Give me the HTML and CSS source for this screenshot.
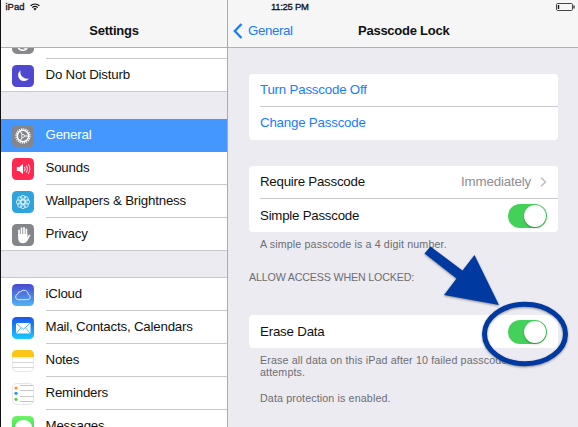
FILE: index.html
```html
<!DOCTYPE html>
<html lang="en">
<head>
<meta charset="utf-8">
<title>Settings</title>
<link rel="stylesheet" href="styles.css">
</head>
<body>
<div class="screen">
  <aside class="sidebar">
    <header class="bar">
      <div class="status"><span class="device">iPad</span>
        <svg class="wifi" width="10" height="8" viewBox="0 0 10 8"><path d="M.6 2.800a6.300 6.300 0 0 1 8.800 0M2.300 4.600a3.900 3.900 0 0 1 5.400 0" fill="none" stroke="#111" stroke-width="1.200"/><path d="M3.400 5.700a2.300 2.300 0 0 1 3.200 0L5 7.500z" fill="#111"/></svg>
      </div>
      <h1 class="title">Settings</h1>
    </header>
    <ul class="list first">
      <li class="row clipped">
        <svg class="icon" viewBox="0 0 22 22"><rect width="22" height="22" rx="5" fill="#88888d"/><path d="M6 14c0 5 9 6 9 1l1.500-2" fill="none" stroke="#fff" stroke-width="1.500"/><path d="M9 15l4 2 3-3" fill="#fff"/></svg>
        <span class="label"></span>
      </li>
      <li class="row last">
        <svg class="icon" viewBox="0 0 22 22"><rect width="22" height="22" rx="4.500" fill="#5048cf"/><path d="M8.600 5.200A6 6 0 1 0 17 13.500A6.800 6.800 0 0 1 8.600 5.200z" fill="#fff"/></svg>
        <span class="label">Do Not Disturb</span>
      </li>
    </ul>
    <ul class="list second">
      <li class="row selected">
        <svg class="icon" viewBox="0 0 22 22"><rect width="22" height="22" rx="4.500" fill="#85868b"/><circle cx="11" cy="11" r="7" fill="none" stroke="#fff" stroke-width="1.400" stroke-dasharray="1.200 1"/><circle cx="11" cy="11" r="5.700" fill="none" stroke="#fff" stroke-width="1.500"/><path d="M11 11h5M11 11l-2.600-4.600M11 11l-2.600 4.600" stroke="#fff" stroke-width="1"/><circle cx="11" cy="11" r="1.500" fill="#85868b" stroke="#fff" stroke-width=".8"/></svg>
        <span class="label">General</span>
      </li>
      <li class="row">
        <svg class="icon" viewBox="0 0 22 22"><rect width="22" height="22" rx="4.500" fill="#ff2850"/><path d="M4.800 9h2.400l3.800-3v10l-3.800-3H4.800z" fill="#fff"/><path d="M12.500 8.800q1.400 2.200 0 4.400M14.400 7.500q2.300 3.500 0 7M16.300 6.300q3.100 4.700 0 9.400" fill="none" stroke="#fff" stroke-width=".9"/></svg>
        <span class="label">Sounds</span>
      </li>
      <li class="row">
        <svg class="icon" viewBox="0 0 22 22"><rect width="22" height="22" rx="4.500" fill="#2fa4dc"/><g fill="none" stroke="#e8f8ff" stroke-width=".85"><circle cx="11" cy="11" r="2.200"/><circle cx="11" cy="6.700" r="2.300"/><circle cx="14.040" cy="7.960" r="2.300"/><circle cx="15.300" cy="11" r="2.300"/><circle cx="14.040" cy="14.040" r="2.300"/><circle cx="11" cy="15.300" r="2.300"/><circle cx="7.960" cy="14.040" r="2.300"/><circle cx="6.700" cy="11" r="2.300"/><circle cx="7.960" cy="7.960" r="2.300"/></g></svg>
        <span class="label">Wallpapers &amp; Brightness</span>
      </li>
      <li class="row last">
        <svg class="icon" viewBox="0 0 22 22"><rect width="22" height="22" rx="4.500" fill="#85868b"/><path d="M7 12V6.300M9.500 11V4M12 11V3.800M14.400 12V5.300" stroke="#fff" stroke-width="1.700" stroke-linecap="round"/><path d="M6.150 10h9.100v3.200l1.500-2.200q1.300-.9 1.600.2l-2.900 5.600q-1.200 2.400-4.200 2.400-5.100 0-5.100-5z" fill="#fff"/></svg>
        <span class="label">Privacy</span>
      </li>
    </ul>
    <ul class="list third">
      <li class="row">
        <svg class="icon" viewBox="0 0 22 22"><defs><linearGradient id="cloud" x2="0" y2="1"><stop stop-color="#4b48cc"/><stop offset="1" stop-color="#4eb4f5"/></linearGradient></defs><rect width="22" height="22" rx="4.500" fill="url(#cloud)"/><path d="M6.200 15.700a2.900 2.900 0 0 1-.4-5.700a2.600 2.600 0 0 1 3-2.400a4.300 4.300 0 0 1 7.500 2.900a2.700 2.700 0 0 1-.2 5.200z" fill="none" stroke="#dceaff" stroke-width="1"/></svg>
        <span class="label">iCloud</span>
      </li>
      <li class="row">
        <svg class="icon" viewBox="0 0 22 22"><defs><linearGradient id="mail" x2="0" y2="1"><stop stop-color="#1b55e8"/><stop offset="1" stop-color="#18cafc"/></linearGradient></defs><rect width="22" height="22" rx="4.500" fill="url(#mail)"/><rect x="4" y="6" width="14.500" height="10.500" rx="1" fill="#fff"/><path d="M4.400 6.400l6.850 6 6.850-6M4.500 16l4.600-5.300M18 16l-4.600-5.300" fill="none" stroke="#4aa6ef" stroke-width=".9"/></svg>
        <span class="label">Mail, Contacts, Calendars</span>
      </li>
      <li class="row">
        <svg class="icon" viewBox="0 0 22 22"><rect x=".4" y=".4" width="21.200" height="21.200" rx="4.500" fill="#fff" stroke="#ddd" stroke-width=".8"/><path d="M0 7V4.500A4.500 4.500 0 0 1 4.500 0h13A4.500 4.500 0 0 1 22 4.500V7z" fill="#fcc618"/><path d="M.5 8h21" stroke="#ccc" stroke-width=".6" stroke-dasharray="1 .6"/><path d="M.5 12.500h21M.5 17.500h21" stroke="#d6d6d6"/></svg>
        <span class="label">Notes</span>
      </li>
      <li class="row">
        <svg class="icon" viewBox="0 0 22 22"><rect x=".4" y=".4" width="21.200" height="21.200" rx="4.500" fill="#fff" stroke="#ddd" stroke-width=".8"/><path d="M8 2.500h13.500M8 7.500h13.500M8 13.500h13.500M8 18.500h13.500" stroke="#c7c7c7"/><circle cx="4" cy="5" r="1.600" fill="#ff9320"/><circle cx="4" cy="10.300" r="1.600" fill="#1c9bf6"/><circle cx="4" cy="16.300" r="1.600" fill="#5dcc3d"/></svg>
        <span class="label">Reminders</span>
      </li>
      <li class="row">
        <svg class="icon" viewBox="0 0 22 22"><defs><linearGradient id="msg" x2="0" y2="1"><stop stop-color="#70f36b"/><stop offset="1" stop-color="#26d335"/></linearGradient></defs><rect width="22" height="22" rx="4.500" fill="url(#msg)"/><ellipse cx="11.500" cy="10.800" rx="8.500" ry="6.800" fill="#fff"/></svg>
        <span class="label">Messages</span>
      </li>
    </ul>
  </aside>
  <main class="detail">
    <header class="bar">
      <div class="status"><span class="clock">11:25 PM</span>
        <svg class="battery" width="19" height="8" viewBox="0 0 19 8"><rect x=".5" y=".5" width="16" height="7" rx="1.200" fill="none" stroke="#444"/><rect x="1.800" y="2" width="1.400" height="4" fill="#111"/><path d="M18 2.500v3" stroke="#444" stroke-width="1.500"/></svg>
      </div>
      <div class="nav">
        <a class="back"><svg width="10" height="16" viewBox="0 0 10 16"><path d="M8.500 1L1.800 8l6.700 7" fill="none" stroke="#157efb" stroke-width="2.300"/></svg><span>General</span></a>
        <h2 class="title">Passcode Lock</h2>
      </div>
    </header>
    <section class="content">
      <div class="card links">
        <div class="cell"><span>Turn Passcode Off</span></div>
        <div class="cell"><span>Change Passcode</span></div>
      </div>
      <div class="card options">
        <div class="cell"><span>Require Passcode</span><span class="value">Immediately</span><svg class="chevron" width="7" height="10" viewBox="0 0 7 10"><path d="M1 .7L5.500 5 1 9.300" fill="none" stroke="#bdbdc2" stroke-width="1.500"/></svg></div>
        <div class="cell"><span>Simple Passcode</span><span class="switch"></span></div>
      </div>
      <p class="note simple-note">A simple passcode is a 4 digit number.</p>
      <h3 class="group">ALLOW ACCESS WHEN LOCKED:</h3>
      <div class="card erase">
        <div class="cell"><span>Erase Data</span><span class="switch"></span></div>
      </div>
      <p class="note erase-note">Erase all data on this iPad after 10 failed passcode<br>attempts.</p>
      <p class="note protection">Data protection is enabled.</p>
    </section>
  </main>
  <svg class="callout" width="578" height="427" viewBox="0 0 578 427"><path d="M430.500 246.500L462.500 270.500L474.500 255L499 305L444 295L456.500 278.500L424.500 253.500z" fill="#0039a0"/><ellipse cx="525" cy="334" rx="40.500" ry="29.700" fill="none" stroke="#0039a0" stroke-width="5"/></svg>
</div>
</body>
</html>
```
FILE: styles.css
```css
* { box-sizing: border-box; }
body, h1, h2, h3, p, ul { margin: 0; padding: 0; }
body { background: #ecebf1; color: #111; font: 13.3px/16px "Liberation Sans", Arial, sans-serif; letter-spacing: -.2px; overflow: hidden; }
.screen { position: relative; display: flex; width: 578px; height: 427px; overflow: hidden; }
.sidebar { width: 228px; border-left: 1px solid #111; border-right: 1px solid #a9a9b0; overflow: hidden; }
.detail { flex: 1; }
.bar { height: 48px; background: #f6f6f7; border-bottom: 1px solid #b0b0b4; }
.status { display: flex; align-items: center; height: 14px; font-size: 9.5px; line-height: 14px; letter-spacing: 0; -webkit-text-stroke: .3px #111; }
.device { margin-left: 4.5px; }
.wifi { margin-left: 5px; }
.clock { margin-left: 43px; letter-spacing: -.3px; }
.battery { margin-left: auto; margin-right: 3px; }
.title { font-size: 13px; line-height: 16px; font-weight: bold; letter-spacing: -.25px; }
.sidebar .title { margin-top: 9px; text-align: center; }
.list { list-style: none; background: #fff; }
.first { height: 44px; overflow: hidden; border-bottom: 1px solid #c8c8cd; }
.second { height: 132px; margin-top: 27px; border-bottom: 1px solid #c8c8cd; }
.third { margin-top: 26px; border-top: 1px solid #c8c8cd; }
.row { display: flex; align-items: center; height: 33px; padding-left: 11px; }
.icon { flex: none; width: 22px; height: 22px; }
.label { flex: 1; height: 33px; margin-left: 11.5px; line-height: 32px; border-bottom: 1px solid #c8c8cd; }
.third .label { line-height: 31px; }
.clipped { margin-top: -22px; }
.row.last .label { border-bottom: 0; }
.selected { background: #4397fe; color: #fff; }
.selected .label { border-color: #4397fe; }
.nav { display: flex; align-items: center; height: 16px; margin-top: 9px; }
.back { display: flex; align-items: center; width: 124px; padding-left: 5px; color: #157efb; letter-spacing: -.4px; }
.back span { margin-left: 5px; }
.nav .title { margin-left: 6px; }
.content { padding: 26px 20px 0 21px; }
.card { background: #fff; border-radius: 4px; padding-left: 11px; }
.cell { display: flex; align-items: center; height: 33px; padding-right: 11px; }
.cell:not(:last-child) { border-bottom: 1px solid #c8c8cd; }
.links { color: #157efb; }
.links .cell:last-child { padding-bottom: 1px; }
.options { margin-top: 26px; }
.options .cell { letter-spacing: -.24px; }
.value { margin-left: auto; color: #8e8e93; }
.options .value { letter-spacing: -.16px; }
.chevron { margin-left: 9px; }
.switch { display: flex; justify-content: flex-end; width: 39px; height: 24px; margin-left: auto; padding: 1px; border-radius: 12px; background: #43d159; }
.switch::after { content: ""; width: 22px; height: 22px; border-radius: 11px; background: #fff; box-shadow: 0 1px 2px #0005; }
.note { padding-left: 11px; color: #6d6d72; font-size: 10.7px; line-height: 12px; letter-spacing: .13px; }
.simple-note { margin-top: 6px; }
.group { margin-top: 21px; color: #6d6d72; font-size: 10.7px; line-height: 13px; font-weight: normal; letter-spacing: -.17px; white-space: nowrap; }
.erase { margin-top: 31px; }
.erase-note { margin-top: 6px; white-space: nowrap; }
.protection { margin-top: 14px; }
.callout { position: absolute; inset: 0; filter: drop-shadow(0 1px 1px #0006); }
```
